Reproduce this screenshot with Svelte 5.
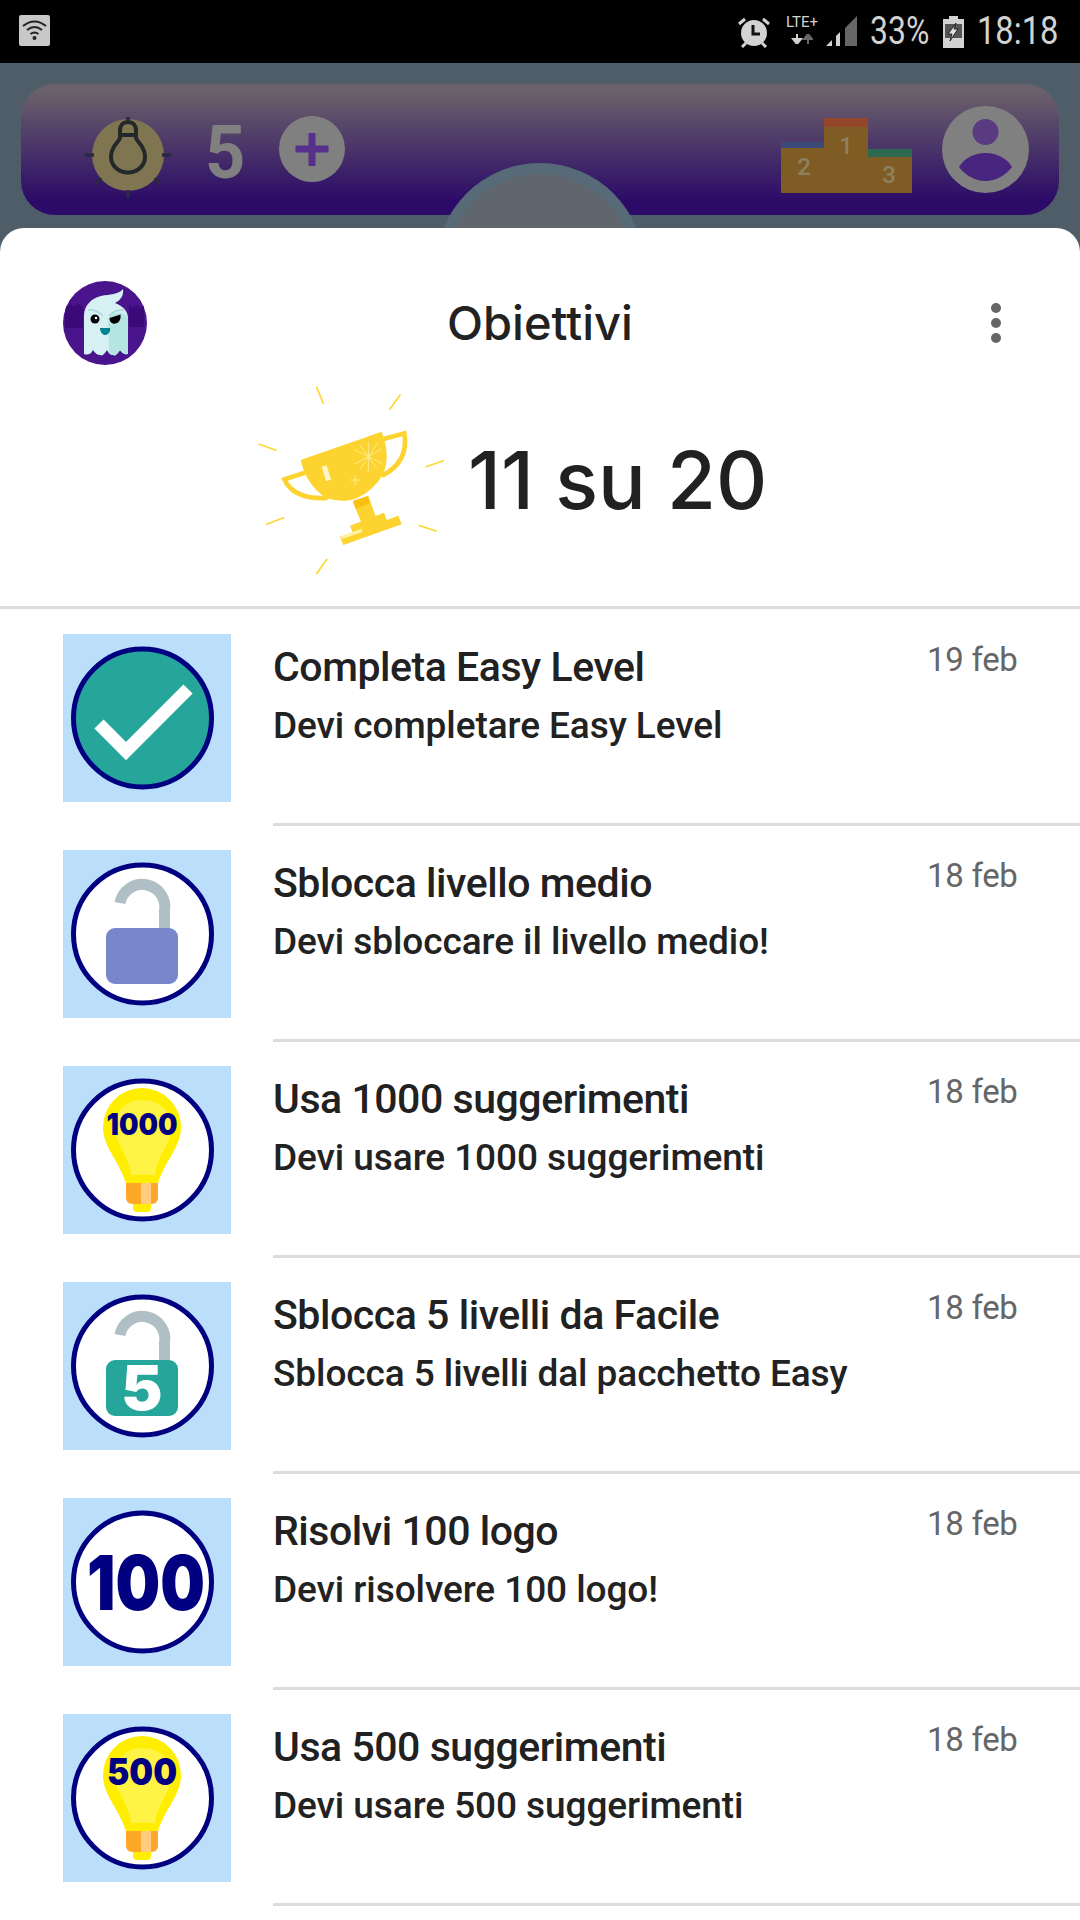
<script>
  const rows = [
    { kind: 'check', title: 'Completa Easy Level', sub: 'Devi completare Easy Level', date: '19 feb' },
    { kind: 'lock', title: 'Sblocca livello medio', sub: 'Devi sbloccare il livello medio!', date: '18 feb' },
    { kind: 'bulb1000', title: 'Usa 1000 suggerimenti', sub: 'Devi usare 1000 suggerimenti', date: '18 feb' },
    { kind: 'lock5', title: 'Sblocca 5 livelli da Facile', sub: 'Sblocca 5 livelli dal pacchetto Easy', date: '18 feb' },
    { kind: 'n100', title: 'Risolvi 100 logo', sub: 'Devi risolvere 100 logo!', date: '18 feb' },
    { kind: 'bulb500', title: 'Usa 500 suggerimenti', sub: 'Devi usare 500 suggerimenti', date: '18 feb' }
  ];
</script>

{#snippet bulb(label, size, base, len)}
  <path d="M79 22a39 39 0 0 1 39 39c0 20-15 32-23 56H63c-8-24-23-36-23-56a39 39 0 0 1 39-39z" fill="#ffee00"/>
  <path d="M79 34c18 0 30 12 30 27 0 16-14 26-17 48H68c-3-22-16-32-17-48 0-15 12-27 28-27z" fill="#fff345"/>
  <path d="M63 117h32v15a6 6 0 0 1-6 6H69a6 6 0 0 1-6-6z" fill="#ffa726"/>
  <rect x="78" y="117" width="10" height="21" fill="#ffcc80"/>
  <path d="M70 138h18v4a4 4 0 0 1-4 4h-10a4 4 0 0 1-4-4z" fill="#ffee00"/>
  <text x="79" y={base} text-anchor="middle" font-size={size} textLength={len} lengthAdjust="spacingAndGlyphs" class="num">{label}</text>
{/snippet}

{#snippet lockIcon(color)}
  <path d="M57 53A22.500 22.500 0 0 1 101.500 61V82" fill="none" stroke="#b0bec5" stroke-width="11"/>
  <rect x="43" y="78" width="72" height="56" rx="9" fill={color}/>
{/snippet}

<div class="screen">
  <header class="status">
    <svg class="wifi" viewBox="0 0 31 31" width="31" height="31">
      <rect width="31" height="31" rx="2" fill="#c8c8c8"/>
      <g fill="none" stroke="#222" stroke-width="2">
        <path d="M4 11q11.500-9 23 0"/><path d="M8 15q7.500-6 15 0"/><path d="M11.500 19q4-3 8 0"/>
      </g>
      <circle cx="15.500" cy="23" r="2" fill="#222"/>
    </svg>
    <div class="status-right">
      <svg viewBox="0 0 32 32" width="32" height="32" class="alarm">
        <circle cx="16" cy="17" r="13" fill="#d2d2d2"/>
        <path d="M15 9v9h7" fill="none" stroke="#111" stroke-width="3"/>
        <path d="M1 8l6-5M31 8l-6-5M4 31l4-4M28 31l-4-4" stroke="#d2d2d2" stroke-width="3"/>
      </svg>
      <div class="lte">
        <span class="lte-text">LTE+</span>
        <svg viewBox="0 0 22 10" width="22" height="10"><path d="M6 0v6M2 5l4 5 4-5z" stroke="#d2d2d2" stroke-width="2" fill="#d2d2d2"/><path d="M17 10V4M13 5l4-5 4 5z" stroke="#666" stroke-width="2" fill="#666"/></svg>
      </div>
      <svg viewBox="0 0 31 31" width="31" height="31" class="signal">
        <path d="M0 30l6-6v6z" fill="#d2d2d2"/><path d="M10 30V20l4-4v14z" fill="#d2d2d2"/><path d="M19 30V12L31 0v30z" fill="#666"/>
      </svg>
      <span class="st-text pct">33%</span>
      <svg viewBox="0 0 21 32" width="21" height="32" class="batt">
        <path d="M6 0h9v3h6v29H0V3h6z" fill="#d2d2d2"/><path d="M2 8h17v14H2z" fill="#555"/><path d="M13 7L5 18h4l-2 7 8-12h-4l2-6z" fill="#e0e0e0" stroke="#222" stroke-width="1"/>
      </svg>
      <span class="st-text time">18:18</span>
    </div>
  </header>

  <div class="backdrop">
    <div class="bar">
      <div class="notch"><div class="notch-inner"></div></div>
      <div class="bar-left">
        <svg class="bar-bulb" viewBox="0 0 86 82" width="86" height="82">
          <circle cx="43" cy="38" r="36" fill="#7f7651"/>
          <path d="M43 0v5M0 38h9M77 38h9M11 67l5-6M75 67l-5-6M43 73v8" stroke="#2a2a40" stroke-width="3.500"/>
          <path d="M43 5c-5 0-8 3-8 8v8c-1 4-9 8-9 19a17 15.500 0 0 0 34 0c0-11-8-15-9-19v-8c0-5-3-8-8-8zM35 18h16" fill="none" stroke="#25282b" stroke-width="4"/>
        </svg>
        <span class="five">5</span>
        <svg viewBox="0 0 66 66" width="66" height="66" class="plus">
          <circle cx="33" cy="33" r="33" fill="#808080"/>
          <path d="M33 17v33M16.500 33h33" stroke="#56308a" stroke-width="7"/>
        </svg>
      </div>
      <div class="bar-right">
        <svg viewBox="0 0 131 75" width="131" height="75" class="podium">
          <rect x="0" y="24" width="43" height="51" fill="#7e5c24"/>
          <rect x="0" y="24" width="43" height="6" fill="#3b4a78"/>
          <rect x="43" y="0" width="44" height="75" fill="#7e5c24"/>
          <rect x="43" y="0" width="44" height="9" fill="#94462a"/>
          <rect x="87" y="31" width="44" height="44" fill="#7e5c24"/>
          <rect x="87" y="31" width="44" height="8" fill="#2e6a52"/>
          <text x="23" y="57" class="pod">2</text><text x="65" y="36" class="pod">1</text><text x="108" y="65" class="pod">3</text>
        </svg>
        <svg viewBox="0 0 87 87" width="87" height="87" class="user">
          <circle cx="43.500" cy="43.500" r="43.500" fill="#808080"/>
          <circle cx="43.500" cy="26" r="13" fill="#5a3a80"/>
          <path d="M17 61c6-10 17-14 26.500-14S64 51 70 61c-6 8-16 14-26.500 14S23 69 17 61z" fill="#48257f"/>
        </svg>
      </div>
    </div>
  </div>

  <main class="sheet">
    <div class="sheet-head">
      <svg viewBox="0 0 84 84" width="84" height="84" class="ghost">
        <defs><clipPath id="av"><circle cx="42" cy="42" r="42"/></clipPath></defs>
        <g clip-path="url(#av)">
          <rect width="84" height="84" fill="#4a148c"/>
          <path d="M2 26l5-3 4 3 4-3 5 2v22H2zM66 24l4 3 4-3 3 3 4-3v22H66z" fill="#3c0a78"/>
          <path d="M21 73V35C21 24 29 17 38 15 47 13 55 14 60 8 61 14 58 19 52 22 60 25 65 30 65 37V73Q60 74 57 69 53 76 50 74 46 74 44 69 40 76 37 74 33 74 30 69 27 75 21 73Z" fill="#d6f0f3"/>
          <path d="M45 38C50 30 60 30 65 37V73Q60 74 57 69 53 76 50 74 48 74 46 72Z" fill="#b5e5e2"/>
          <path d="M25 29q8-1 15 6M61 29q-8-1-15 6" fill="none" stroke="#a9d9d9" stroke-width="1.500"/>
          <circle cx="32" cy="38" r="4.500" fill="#000"/><circle cx="33" cy="37" r="1.300" fill="#fff"/>
          <path d="M46.500 37l11-3.500c1 7-4 10-7.500 9-2.500-.8-3.500-3-3.500-5.500z" fill="#000"/>
          <path d="M37 47h10q1 5-4 7h-2q-4-2-4-7z" fill="#00838f"/>
        </g>
      </svg>
      <h1 class="head-title">Obiettivi</h1>
      <svg viewBox="0 0 12 42" width="12" height="42" class="dots">
        <circle cx="6" cy="6" r="5" fill="#666"/><circle cx="6" cy="21" r="5" fill="#666"/><circle cx="6" cy="36" r="5" fill="#666"/>
      </svg>
    </div>

    <div class="score">
      <svg viewBox="648 375 570 570" width="190" height="190" class="trophy">
        <g stroke="#fdd835" stroke-width="5" stroke-linecap="round">
          <path d="M830 382l20 48M1080 405l-30 42M658 553l50 18M1210 602l-52 18M680 793l51-20M1138 797l50 16M860 898l-30 43"/>
        </g>
        <path d="M795 638l-62 20q28 62 130 56M1028 538l65-18q15 85-68 128" fill="none" stroke="#fdd32f" stroke-width="14"/>
        <path d="M782 600L1025 515q40 105-25 165-60 60-140 35-62-40-78-115z" fill="#fdd32f"/>
        <path d="M938 725L985 708 1008 772 965 790zM930 797L1032 758 1042 785 940 822zM900 830L1075 767 1085 793 910 855z" fill="#fdd32f"/>
        <path d="M940 722L983 708 990 730 948 746z" fill="#fbbf0f"/>
        <path d="M845 620l15-4 13 43-15 4z" fill="#fff6c8"/>
        <path d="M903 828l62-22 2 10-62 22z" fill="#fff0a8"/>
        <path d="M985 545v90M945 570l82 40M945 612l80-45M960 555l50 70M1012 550l-52 78M930 660h30M945 645v32" stroke="#fff0a0" stroke-width="2.500" fill="none"/>
      </svg>
      <span class="score-text">11 su 20</span>
    </div>

    <div class="list">
      {#each rows as row}
        <div class="row">
          <svg viewBox="0 0 168 168" width="168" height="168" class="icon">
            <rect width="168" height="168" fill="#bbdefb"/>
            <circle cx="79.500" cy="84" r="69" fill={row.kind === 'check' ? '#26a69a' : '#fff'} stroke="#000080" stroke-width="5"/>
            {#if row.kind === 'check'}
              <path d="M36 90l27 27 62-62" fill="none" stroke="#fff" stroke-width="13"/>
            {:else if row.kind === 'lock'}
              {@render lockIcon('#7986cb')}
            {:else if row.kind === 'lock5'}
              {@render lockIcon('#26a69a')}
              <text x="79" y="128" text-anchor="middle" font-size="62" class="num-white">5</text>
            {:else if row.kind === 'bulb1000'}
              {@render bulb('1000', 30, 69, 71)}
            {:else if row.kind === 'bulb500'}
              {@render bulb('500', 37, 71, 70)}
            {:else}
              <text x="83" y="112" text-anchor="middle" font-size="76" textLength="118" lengthAdjust="spacingAndGlyphs" class="num">100</text>
            {/if}
          </svg>
          <div class="row-body">
            <div class="row-text">
              <div class="row-title">{row.title}</div>
              <div class="row-sub">{row.sub}</div>
            </div>
            <span class="row-date">{row.date}</span>
          </div>
        </div>
      {/each}
    </div>
  </main>
</div>

<style>
  :global(body) { margin: 0; background: #fff; }
  .screen { width: 1080px; height: 1920px; overflow: hidden; background: #4e5d68; font-family: Roboto, sans-serif; }

  .status { height: 63px; background: #000; display: flex; align-items: center; justify-content: space-between; padding: 0 22px 0 19px; box-sizing: border-box; }
  .wifi { margin-top: -2px; }
  .status-right { display: flex; align-items: center; height: 63px; }
  .alarm { margin-right: 12px; }
  .lte { display: flex; flex-direction: column; align-items: center; width: 40px; margin-right: 4px; margin-top: -3px; gap: 6px; }
  .lte-text { font-size: 15px; line-height: 12px; color: #d2d2d2; }
  .signal { margin-right: 13px; }
  .st-text { color: #d2d2d2; font-size: 38px; line-height: 63px; display: inline-block; transform-origin: left; white-space: nowrap; }
  .pct { width: 60px; margin-right: 13px; transform: scaleX(.84); }
  .batt { margin-right: 13px; }
  .time { width: 81px; transform: scaleX(.86); }

  .backdrop { height: 165px; background: #4e5d68; padding: 21px 21px 0; box-sizing: border-box; overflow: hidden; }
  .bar { position: relative; height: 131px; border-radius: 34px; background: linear-gradient(#6b616a 5%, #2b0a68 90%); display: flex; justify-content: space-between; align-items: flex-start; }
  .notch { position: absolute; left: 415px; top: 79px; width: 208px; height: 208px; border-radius: 50%; background: #566b77; display: flex; align-items: center; justify-content: center; }
  .notch-inner { width: 186px; height: 186px; border-radius: 50%; background: #5f666d; }
  .bar-left { display: flex; align-items: flex-start; margin-left: 64px; }
  .bar-bulb { margin-top: 33px; }
  .five { font-size: 74px; font-weight: 700; color: #808080; margin-left: 34px; width: 39px; line-height: 66px; margin-top: 36px; display: inline-block; transform: scaleX(.95); transform-origin: left; }
  .plus { margin-left: 35px; margin-top: 32px; }
  .bar-right { display: flex; align-items: flex-start; margin-right: 30px; position: relative; }
  .podium { margin-right: 30px; margin-top: 34px; }
  .user { margin-top: 22px; }
  .pod { font-family: Roboto, sans-serif; font-size: 24px; font-weight: 500; fill: #8e8060; text-anchor: middle; }

  .sheet { position: relative; height: 1692px; background: #fff; border-radius: 24px 24px 0 0; }
  .sheet-head { display: grid; grid-template-columns: 1fr auto 1fr; align-items: center; padding: 53px 63px 0; height: 84px; }
  .head-title { margin: -2px 0 0; font-family: Inter, sans-serif; font-size: 47px; font-weight: 500; color: #222; }
  .dots { justify-self: end; margin-right: 15px; }
  .score { display: flex; align-items: center; margin-top: 20px; padding-left: 256px; height: 190px; border-bottom: 3px solid #dcdcdc; padding-bottom: 31px; }
  .score-text { font-family: Inter, sans-serif; font-size: 79.500px; font-weight: 500; color: #212121; margin-left: 22px; }
  .list { padding-left: 63px; }
  .row { display: flex; height: 216px; box-sizing: border-box; padding-top: 25px; }
  .icon { flex: none; }
  .row-body { position: relative; flex: 1; margin-left: 42px; height: 192px; border-bottom: 3px solid #dcdcdc; box-sizing: border-box; display: flex; justify-content: space-between; }
  .row-text { min-width: 0; }
  .row-title { font-size: 41px; font-weight: 500; line-height: 50px; margin-top: 8px; color: #212121; white-space: nowrap; letter-spacing: -.45px; }
  .row-sub { font-size: 37px; font-weight: 500; line-height: 44px; margin-top: 12px; color: #222; white-space: nowrap; letter-spacing: -.08px; }
  .row-date { font-size: 33px; font-weight: 400; color: #666; line-height: 40px; margin-top: 6px; width: 89px; margin-right: 64px; white-space: nowrap; letter-spacing: -.3px; }
  .num { font-family: Inter, sans-serif; font-weight: 900; fill: #000080; }
  .num-white { font-family: Inter, sans-serif; font-weight: 900; fill: #fff; }
</style>
